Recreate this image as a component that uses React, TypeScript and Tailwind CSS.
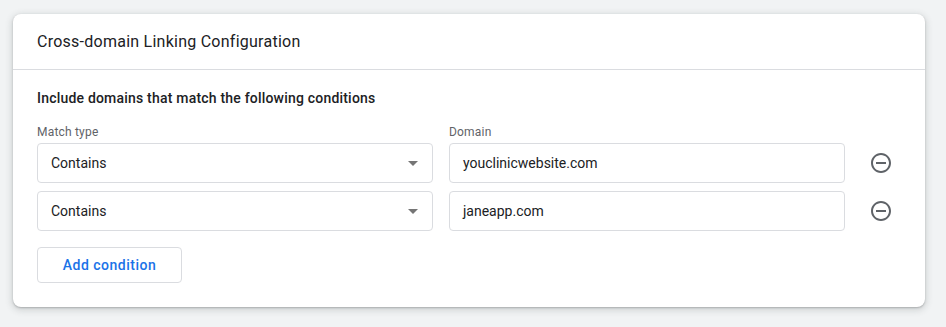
import React from "react";

function Arrow() {
  return (
    <svg width="10" height="5" viewBox="0 0 10 5" className="shrink-0">
      <path d="M0 0l5 5 5-5z" fill="#757575" />
    </svg>
  );
}

function RemoveIcon() {
  return (
    <svg width="24" height="24" viewBox="0 0 24 24">
      <path
        fill="#5f6368"
        d="M7 11v2h10v-2H7zm5-9C6.48 2 2 6.48 2 12s4.48 10 10 10 10-4.48 10-10S17.52 2 12 2zm0 18c-4.41 0-8-3.59-8-8s3.59-8 8-8 8 3.59 8 8-3.59 8-8 8z"
      />
    </svg>
  );
}

function Row({ domain }: { domain: string }) {
  return (
    <div className="grid grid-cols-[1fr_1fr_40px] gap-x-4 items-center">
      <div className="h-10 border border-[#dadce0] rounded-[4px] flex items-center justify-between pl-[13px] pr-[14px]">
        <span className="text-[14px] text-[#202124]">Contains</span>
        <Arrow />
      </div>
      <div className="h-10 border border-[#dadce0] rounded-[4px] flex items-center pl-[13px]">
        <span className="text-[14px] text-[#202124]">{domain}</span>
      </div>
      <div className="flex items-center justify-center">
        <RemoveIcon />
      </div>
    </div>
  );
}

export default function App() {
  return (
    <div
      className="w-[946px] h-[327px] bg-[#f1f3f4] pt-[14px] pl-[13px]"
      style={{ fontFamily: "Roboto, 'Liberation Sans', sans-serif" }}
    >
      <div className="w-[912px] bg-white rounded-[8px] shadow-[0_1px_2px_0_rgba(60,64,67,0.3),0_2px_6px_2px_rgba(60,64,67,0.15)]">
        <div className="h-[56px] border-b border-[#dadce0] flex items-center px-6">
          <span className="text-[16px] tracking-[0.25px] text-[#202124]">Cross-domain Linking Configuration</span>
        </div>
        <div className="px-6 pt-[18px] pb-6">
          <div className="text-[14px] leading-5 font-medium tracking-[0.2px] text-[#202124]">
            Include domains that match the following conditions
          </div>
          <div className="grid grid-cols-[1fr_1fr_40px] gap-x-4 mt-4 mb-[3px]">
            <span className="text-[12px] leading-4 tracking-[0.2px] text-[#5f6368]">Match type</span>
            <span className="text-[12px] leading-4 tracking-[0.2px] text-[#5f6368]">Domain</span>
            <span />
          </div>
          <div className="flex flex-col gap-2">
            <Row domain="youclinicwebsite.com" />
            <Row domain="janeapp.com" />
          </div>
          <button className="mt-4 h-9 w-[145px] border border-[#dadce0] rounded-[4px] text-[14px] font-medium tracking-[0.5px] text-[#1a73e8] flex items-center justify-center">
            Add condition
          </button>
        </div>
      </div>
    </div>
  );
}
